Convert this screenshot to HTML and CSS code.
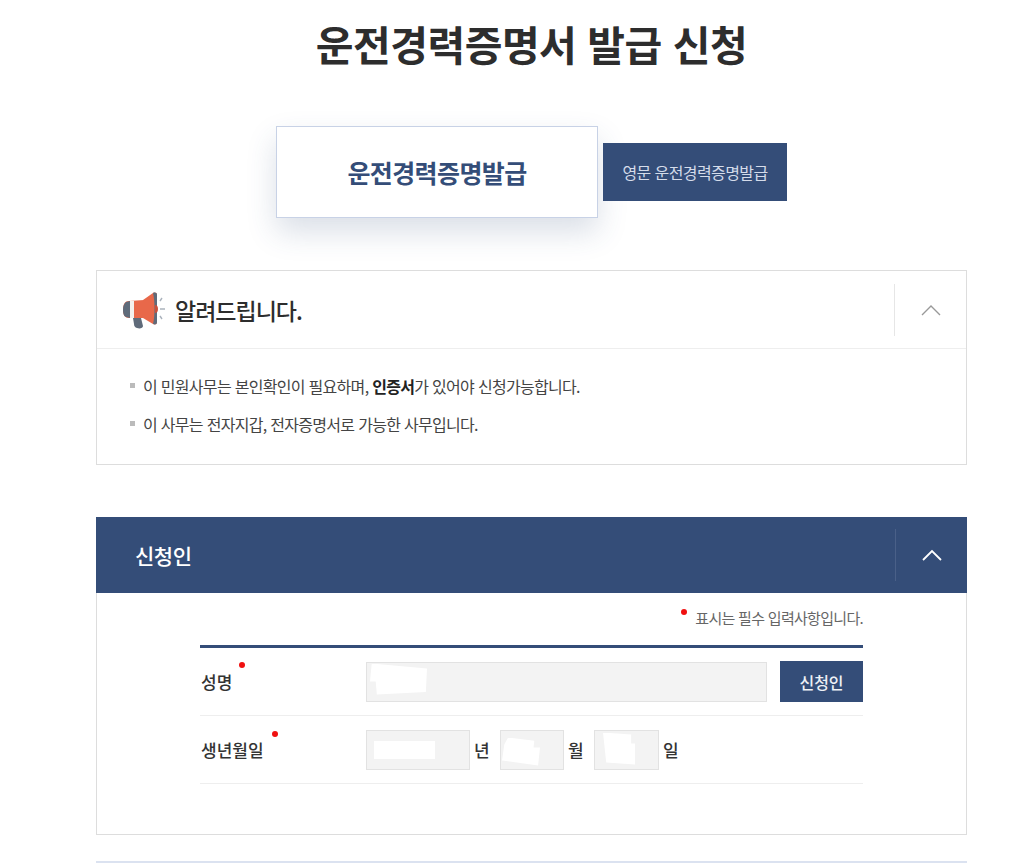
FILE: index.html
```html
<!DOCTYPE html>
<html lang="ko">
<head>
    <meta charset="utf-8">
    <title>운전경력증명서 발급 신청</title>
    <link rel="stylesheet" href="styles.css">
</head>
<body>
    <div class="wrap">
        <h1 class="page-title">운전경력증명서 발급 신청</h1>

        <div class="tabs">
            <a href="#" class="tab tab-on">운전경력증명발급</a>
            <a href="#" class="tab tab-off">영문 운전경력증명발급</a>
        </div>

        <div class="notice">
            <div class="notice-head">
                <div class="notice-title">
                    <svg class="notice-icon" width="44" height="38" viewBox="0 0 44 38">
                        <path d="M7 10 L22 9 L22 27 L7 27 C3 27 1 24 1 19 C1 13 3 10 7 10 Z" fill="#e8684a"/>
                        <path d="M8 10 H12 V27 H8 Z" fill="#f4f1ee"/>
                        <path d="M4 11 C1.500 13 1 16 1 19 C1 22 1.500 25 4 26 L8 27 V10 Z" fill="#5f6b7a"/>
                        <path d="M21 9 L31 2 C33 1 35 1.500 35 4 V31 C35 33.500 33 34 31 33 L21 27 Z" fill="#e8684a"/>
                        <path d="M31 2 C33 1 35 1.500 35 4 V31 C35 33.500 33 34 31 33 C33 25 33 10 31 2 Z" fill="#5f6b7a"/>
                        <path d="M11 27 H19 L21 35 C21 37 18 38 15 37 C13 36.500 12 35 12 33 Z" fill="#5f6b7a"/>
                        <path d="M33 14 a3 4 0 0 1 0 8 Z" fill="#c9503a"/>
                        <path d="M38 10 L40 7 M38 18 H43 M38 25 L40 28" stroke="#aab2bc" stroke-width="1.400" fill="none"/>
                    </svg>
                    <span>알려드립니다.</span>
                </div>
                <div class="toggle">
                    <svg width="20" height="12" viewBox="0 0 20 12"><path d="M1 11 L10 2 L19 11" fill="none" stroke="#999" stroke-width="1.400"/></svg>
                </div>
            </div>
            <ul class="notice-list">
                <li>이 민원사무는 본인확인이 필요하며, <b>인증서</b>가 있어야 신청가능합니다.</li>
                <li>이 사무는 전자지갑, 전자증명서로 가능한 사무입니다.</li>
            </ul>
        </div>

        <div class="panel">
            <div class="panel-head">
                <span class="panel-title">신청인</span>
                <div class="toggle toggle-dark">
                    <svg width="20" height="12" viewBox="0 0 20 12"><path d="M1 11 L10 2 L19 11" fill="none" stroke="#fff" stroke-width="1.800"/></svg>
                </div>
            </div>
            <div class="panel-body">
                <p class="req-note"><i class="dot"></i>표시는 필수 입력사항입니다.</p>
                <div class="form">
                    <div class="form-row">
                        <div class="form-label">성명<i class="dot dot-name"></i></div>
                        <div class="box box-name"><i class="mask mask-name"></i></div>
                        <a href="#" class="btn">신청인</a>
                    </div>
                    <div class="form-row">
                        <div class="form-label">생년월일<i class="dot dot-birth"></i></div>
                        <div class="box box-year"><i class="mask mask-year"></i></div>
                        <span class="unit">년</span>
                        <div class="box box-month"><i class="mask mask-month"></i></div>
                        <span class="unit">월</span>
                        <div class="box box-day"><i class="mask mask-day"></i></div>
                        <span class="unit">일</span>
                    </div>
                </div>
            </div>
        </div>

        <div class="next-line"></div>
    </div>
</body>
</html>
```

FILE: styles.css
```css
html, body {
    height: 863px;
    overflow: hidden;
}

body {
    background-color: #ffffff;
    font-family: "Noto Sans CJK KR", "Noto Sans", sans-serif;
    color: #333;
    margin: 0;
}

a {
    text-decoration: none;
}

.wrap {
    width: 871px;
    margin-left: 96px;
}

.page-title {
    margin: 0;
    height: 126px;
    padding-top: 13px;
    box-sizing: border-box;
    text-align: center;
    font-size: 41px;
    line-height: 60px;
    font-weight: 700;
    letter-spacing: -0.5px;
    color: #2d2d2d;
}

/* tabs */
.tabs {
    display: flex;
    align-items: center;
    padding-left: 180px;
    gap: 5px;
    height: 92px;
}

.tab {
    display: flex;
    align-items: center;
    justify-content: center;
    box-sizing: border-box;
}

.tab-on {
    width: 322px;
    height: 92px;
    background: #fff;
    border: 1px solid #c8d2e6;
    box-shadow: 0 14px 30px rgba(52, 77, 120, 0.18);
    color: #344d78;
    font-size: 25px;
    font-weight: 700;
    letter-spacing: -0.6px;
}

.tab-off {
    width: 184px;
    height: 58px;
    background: #344d78;
    color: #d5dcea;
    font-size: 16px;
    letter-spacing: -0.6px;
}

/* notice box */
.notice {
    margin-top: 52px;
    height: 195px;
    box-sizing: border-box;
    border: 1px solid #ddd;
}

.notice-head {
    display: flex;
    align-items: center;
    justify-content: space-between;
    height: 77px;
    border-bottom: 1px solid #eee;
}

.notice-title {
    display: flex;
    align-items: center;
    gap: 9px;
    padding-left: 25px;
    font-size: 23px;
    font-weight: 500;
    letter-spacing: -1px;
    color: #2d2d2d;
}

.toggle {
    display: flex;
    align-items: center;
    justify-content: center;
    width: 71px;
    height: 52px;
    border-left: 1px solid #e6e6e6;
}

.toggle-dark {
    border-left-color: #4a6088;
}

.notice-list {
    list-style: none;
    margin: 0;
    padding: 18px 0 0 46px;
    font-size: 16px;
    line-height: 38px;
    letter-spacing: -0.7px;
    color: #444;
}

.notice-list li {
    position: relative;
}

.notice-list li::before {
    content: "";
    position: absolute;
    left: -13px;
    top: 16px;
    width: 5px;
    height: 5px;
    background: #bbb;
}

.notice-list b {
    color: #222;
}

/* applicant panel */
.panel {
    margin-top: 52px;
}

.panel-head {
    display: flex;
    align-items: center;
    justify-content: space-between;
    height: 76px;
    background: #344d78;
}

.panel-title {
    padding-left: 39px;
    color: #fff;
    font-size: 21px;
    font-weight: 500;
    letter-spacing: -0.5px;
}

.panel-body {
    height: 242px;
    box-sizing: border-box;
    border: 1px solid #ddd;
    border-top: none;
    padding: 0 103px 0 103px;
}

.req-note {
    margin: 0;
    height: 52px;
    padding-top: 13px;
    box-sizing: border-box;
    text-align: right;
    font-size: 15px;
    line-height: 24px;
    letter-spacing: -0.7px;
    color: #666;
}

.dot {
    display: inline-block;
    width: 6px;
    height: 6px;
    border-radius: 50%;
    background: #f01010;
}

.req-note .dot {
    margin-right: 8px;
    vertical-align: 9px;
}

.form {
    border-top: 3px solid #344d78;
}

.form-row {
    display: flex;
    align-items: center;
    height: 67px;
    border-bottom: 1px solid #eee;
}

.form-label {
    position: relative;
    width: 166px;
    padding-left: 1px;
    box-sizing: border-box;
    font-size: 17px;
    font-weight: 500;
    color: #333;
}

.dot-name {
    position: absolute;
    left: 39px;
    top: -7px;
}

.dot-birth {
    position: absolute;
    left: 72px;
    top: -6px;
}

.box {
    position: relative;
    box-sizing: border-box;
    height: 40px;
    background: #f3f3f3;
    border: 1px solid #e2e2e2;
}

.box-name {
    width: 401px;
    margin-right: 13px;
}

.box-year {
    width: 104px;
}

.box-month {
    width: 64px;
}

.box-day {
    width: 65px;
}

/* white patches blanking out the values */
.mask {
    position: absolute;
    background: #fff;
}

.mask-name {
    left: 3px;
    top: 1px;
    width: 57px;
    height: 31px;
    clip-path: polygon(3% 0, 100% 16%, 98% 92%, 12% 100%, 10% 58%, 0 58%);
}

.mask-year {
    left: 7px;
    top: 10px;
    width: 61px;
    height: 18px;
}

.mask-month {
    left: 1px;
    top: 7px;
    width: 38px;
    height: 28px;
    clip-path: polygon(16% 0, 85% 12%, 83% 36%, 100% 36%, 95% 100%, 0 82%, 6% 25%);
}

.mask-day {
    left: 8px;
    top: 2px;
    width: 32px;
    height: 32px;
    clip-path: polygon(0 0, 88% 6%, 88% 34%, 100% 34%, 100% 100%, 10% 94%);
}

.unit {
    width: 30px;
    padding-left: 4px;
    box-sizing: border-box;
    font-size: 17px;
    font-weight: 500;
    color: #333;
}

.btn {
    display: flex;
    align-items: center;
    justify-content: center;
    width: 83px;
    height: 41px;
    background: #344d78;
    color: #eef1f6;
    font-size: 16px;
    font-weight: 500;
}

.next-line {
    margin-top: 26px;
    height: 3px;
    background: #dbe2f0;
}
```
